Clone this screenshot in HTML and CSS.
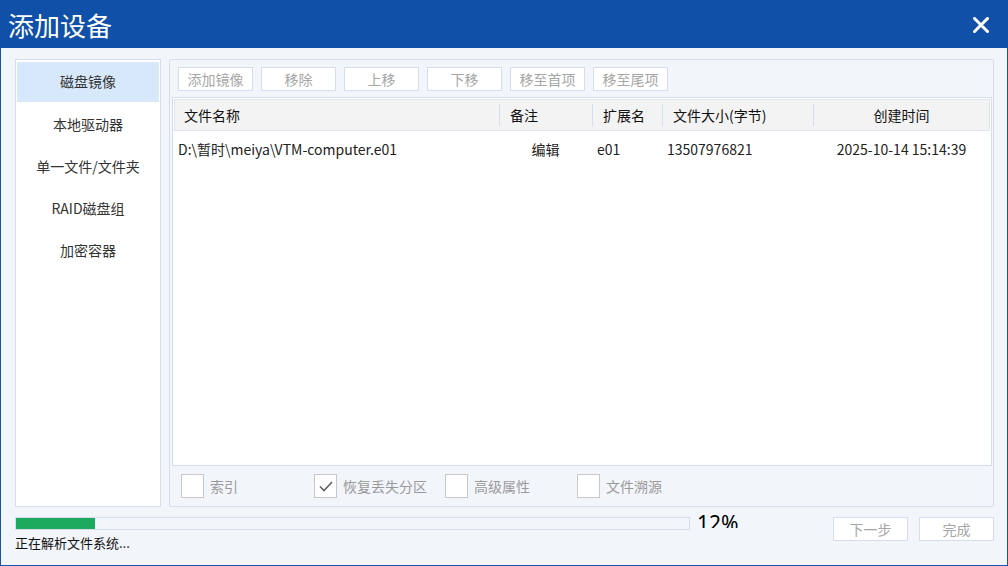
FILE: index.html
```html
<!DOCTYPE html>
<html lang="zh-CN">
<head>
<meta charset="utf-8">
<title>添加设备</title>
<link rel="stylesheet" href="styles.css">
</head>
<body>
<div class="window">
  <div class="titlebar">
    <span class="title">添加设备</span>
    <svg class="close" width="16" height="16" viewBox="0 0 16 16"><path d="M1.5 1.5L14.5 14.5M14.5 1.5L1.5 14.5" stroke="#fff" stroke-width="3" stroke-linecap="square"/></svg>
  </div>
  <div class="content">
    <div class="main">
      <div class="sidebar">
        <div class="nav-item active">磁盘镜像</div>
        <div class="nav-item">本地驱动器</div>
        <div class="nav-item">单一文件/文件夹</div>
        <div class="nav-item">RAID磁盘组</div>
        <div class="nav-item">加密容器</div>
      </div>
      <div class="panel">
        <div class="toolbar">
          <div class="btn">添加镜像</div>
          <div class="btn">移除</div>
          <div class="btn">上移</div>
          <div class="btn">下移</div>
          <div class="btn">移至首项</div>
          <div class="btn">移至尾项</div>
        </div>
        <div class="table">
          <div class="thead">
            <div class="th c1">文件名称</div>
            <div class="th c2">备注</div>
            <div class="th c3">扩展名</div>
            <div class="th c4">文件大小(字节)</div>
            <div class="th c5 center">创建时间</div>
          </div>
          <div class="row">
            <div class="td c1">D:\暂时\meiya\VTM-computer.e01</div>
            <div class="td c2 center">编辑</div>
            <div class="td c3">e01</div>
            <div class="td c4">13507976821</div>
            <div class="td c5 center">2025-10-14 15:14:39</div>
          </div>
        </div>
        <div class="options">
          <div class="opt"><span class="box"></span><span>索引</span></div>
          <div class="opt"><span class="box"><svg width="20" height="20" viewBox="0 0 20 20"><path d="M4 10.5L8 14.5L16 6" fill="none" stroke="#606060" stroke-width="1.6"/></svg></span><span>恢复丢失分区</span></div>
          <div class="opt"><span class="box"></span><span>高级属性</span></div>
          <div class="opt"><span class="box"></span><span>文件溯源</span></div>
        </div>
      </div>
    </div>
    <div class="footer">
      <div class="progress-area">
        <div class="progress-line">
          <div class="progress"><div class="fill" style="width: 11.8%"></div></div>
          <div class="percent">12%</div>
        </div>
        <div class="status">正在解析文件系统...</div>
      </div>
      <div class="actions">
        <div class="btn">下一步</div>
        <div class="btn">完成</div>
      </div>
    </div>
  </div>
</div>
</body>
</html>
```
FILE: styles.css
```css
* { box-sizing: border-box; }
html, body { margin: 0; padding: 0; }
body {
  width: 1008px;
  height: 566px;
  overflow: hidden;
  font-family: "Noto Sans CJK SC", "Noto Sans", sans-serif;
  font-size: 14px;
  color: #222;
  background: #f2f5fa;
}
.window {
  width: 1008px;
  height: 566px;
  border: 1px solid #1552a8;
  border-top: none;
  background: #f2f5fa;
  display: flex;
  flex-direction: column;
}
.titlebar {
  height: 48px;
  margin: 0 -1px;
  background: #1150a8;
  display: flex;
  align-items: center;
  justify-content: space-between;
  padding: 0 19px 0 8px;
  flex-shrink: 0;
}
.title {
  color: #fff;
  font-size: 26px;
  line-height: 30px;
  margin-top: 2px;
}
.close { margin-top: 1px; }
.content {
  flex: 1;
  padding: 11px 13px 0 14px;
  display: flex;
  flex-direction: column;
}
.main {
  height: 448px;
  display: flex;
  gap: 8px;
}
.sidebar {
  width: 146px;
  background: #fff;
  border: 1px solid #d5deee;
  padding: 2px 1px;
  display: flex;
  flex-direction: column;
}
.nav-item {
  height: 42px;
  display: flex;
  align-items: center;
  justify-content: center;
  color: #333;
  font-size: 14px;
  padding-bottom: 2px;
}
.nav-item.active {
  background: #d8e8fb;
  height: 40px;
  margin-bottom: 2px;
}
.panel {
  width: 825px;
  border: 1px solid #d5deee;
  border-radius: 2px;
  display: flex;
  flex-direction: column;
  padding: 7px 1px 0 2px;
}
.toolbar {
  display: flex;
  gap: 8px;
  padding-left: 6px;
  height: 24px;
}
.btn {
  width: 75px;
  height: 24px;
  background: #fff;
  border: 1px solid #d5deee;
  color: #a6a6a6;
  font-size: 14px;
  display: flex;
  align-items: center;
  justify-content: center;
}
.table {
  margin-top: 6px;
  height: 369px;
  background: #fff;
  border: 1px solid #d5deee;
  padding: 1px;
}
.thead {
  height: 32px;
  background: #f3f3f3;
  border: 1px solid #dfe5ef;
  display: flex;
  align-items: center;
}
.th {
  height: 22px;
  line-height: 22px;
  padding-left: 10px;
  border-left: 1px solid #d5deee;
  color: #111;
}
.th.c1 { border-left: none; padding-left: 9px; }
.c1 { width: 324px; }
.c2 { width: 93px; }
.c3 { width: 70px; }
.c4 { width: 151px; }
.c5 { flex: 1; }
.row .c1 { width: 325px; }
.center { text-align: center; padding-left: 0 !important; }
.row {
  display: flex;
  height: 36px;
  align-items: center;
  color: #222;
}
.td { padding-left: 5px; white-space: nowrap; }
.td.c1 { padding-left: 4px; }
.options {
  display: flex;
  padding: 8px 0 0 9px;
}
.opt {
  width: 132px;
  display: flex;
  align-items: center;
  gap: 6px;
  color: #9a9a9a;
  font-size: 14px;
}
.opt:first-child { width: 133px; }
.opt:nth-child(2) { width: 131px; }
.box {
  width: 23px;
  height: 24px;
  border: 1px solid #c8c8c8;
  background: #fff;
  display: flex;
  align-items: center;
  justify-content: center;
}
.footer {
  display: flex;
  justify-content: space-between;
  padding-top: 9px;
}
.progress-area { display: flex; flex-direction: column; }
.progress-line { display: flex; align-items: flex-start; gap: 7px; }
.progress {
  width: 675px;
  height: 13px;
  border: 1px solid #d5deee;
  background: #f2f5fa;
  margin-top: 1px;
}
.fill { height: 100%; background: #1daa5e; }
.percent {
  height: 15px;
  overflow: hidden;
  font-size: 21px;
  line-height: 21px;
  color: #000;
  margin-top: -3px;
  font-family: "Noto Sans", sans-serif;
}
.status {
  margin-top: 4px;
  color: #111;
  font-size: 13px;
  line-height: 18px;
}
.actions {
  display: flex;
  gap: 11px;
  padding-top: 1px;
}
```
